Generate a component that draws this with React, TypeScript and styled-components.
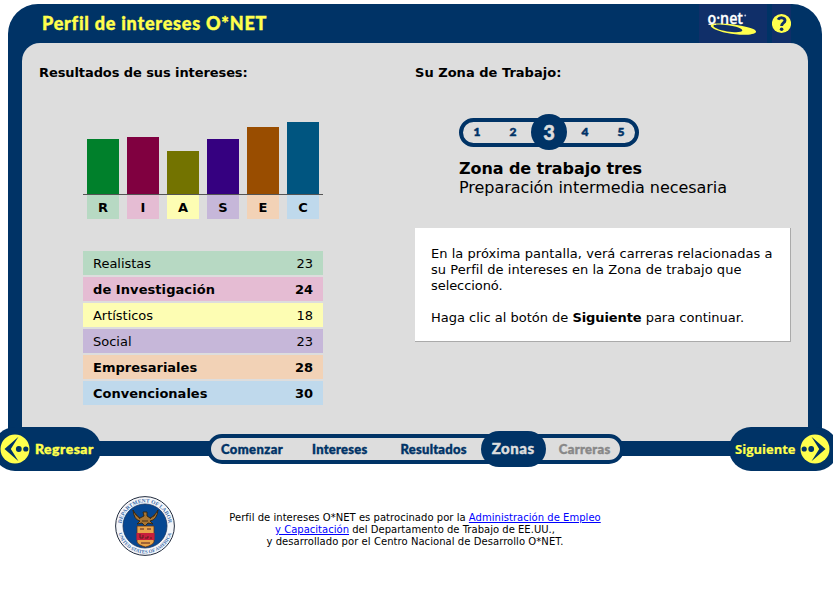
import React from "react";
import styled, { createGlobalStyle } from "styled-components";

const NAVY = "#003366";
const YELLOW = "#ffff4d";
const GRAY = "#dddddd";

const GlobalStyle = createGlobalStyle`
  *, *::before, *::after { box-sizing: border-box; }
  body {
    margin: 0;
    overflow: hidden;
    background: #fff;
    color: #000;
    font-family: Verdana, "DejaVu Sans", sans-serif;
    font-size: 13px;
    line-height: 16px;
  }
  p, h1, h2, ul { margin: 0; padding: 0; }
`;

const Page = styled.div`
  width: 833px;
  height: 590px;
  padding-top: 4px;
  overflow: hidden;
`;

const Frame = styled.main`
  margin: 0 11px 0 8px;
  height: 452px;
  padding: 0 14px 15px;
  display: flex;
  flex-direction: column;
  background: ${NAVY};
  border-radius: 30px 30px 0 0;
`;

const Header = styled.header`
  height: 39px;
  flex: none;
  display: flex;
  align-items: stretch;
  padding: 0 17px 0 20px;
`;

const Title = styled.h1`
  flex: 1;
  font: 900 18px/38px Lato, sans-serif;
  letter-spacing: 0.76px;
  -webkit-text-stroke: 0.4px currentColor;
  color: ${YELLOW};
  white-space: nowrap;
`;

const HeaderTile = styled.div<{ $width: number }>`
  width: ${(p) => p.$width}px;
  height: 39px;
  background: #102f69;
  margin-left: 5px;

  svg { display: block; }
`;

const Panel = styled.section`
  flex: 1;
  display: grid;
  grid-template-columns: 376px 376px;
  padding: 22px 17px 0;
  background: ${GRAY};
  border-radius: 18px 18px 0 0;
`;

const Column = styled.div`
  min-width: 0;
`;

const Text = styled.span<{ $spacing?: number; $bold?: boolean }>`
  letter-spacing: ${(p) => p.$spacing ?? 0}px;
  font-weight: ${(p) => (p.$bold ? 700 : "inherit")};
  white-space: nowrap;
`;

const SectionTitle = styled.h2<{ $spacing: number }>`
  font-size: 13px;
  line-height: 16px;
  letter-spacing: ${(p) => p.$spacing}px;
  white-space: nowrap;
`;

const Chart = styled.div`
  width: 240px;
  margin: 33px 0 0 44px;
`;

const Bars = styled.div`
  height: 81px;
  padding: 0 4px;
  display: flex;
  align-items: flex-end;
  gap: 8px;
  border-bottom: 1px solid #555;
`;

const Bar = styled.div<{ $height: number; $color: string }>`
  width: 32px;
  height: ${(p) => p.$height}px;
  background: ${(p) => p.$color};
`;

const Letters = styled.div`
  display: flex;
  gap: 8px;
  padding: 0 4px;
`;

const Letter = styled.div<{ $tint: string }>`
  width: 32px;
  height: 24px;
  font-weight: 700;
  line-height: 25px;
  text-align: center;
  background: ${(p) => p.$tint};
`;

const Scores = styled.ul`
  width: 240px;
  margin: 32px 0 0 44px;
  display: grid;
  gap: 2px;
  list-style: none;
`;

const Score = styled.li<{ $tint: string; $bold: boolean }>`
  height: 24px;
  padding: 0 10px;
  display: flex;
  justify-content: space-between;
  line-height: 25px;
  font-weight: ${(p) => (p.$bold ? 700 : 400)};
  background: ${(p) => p.$tint};
`;

const ZonePill = styled.div`
  width: 180px;
  height: 29px;
  margin: 37px 0 0 44px;
  display: grid;
  grid-template-columns: repeat(5, 36px);
  justify-content: center;
  align-content: center;
  align-items: center;
  justify-items: center;
  border: 4px solid ${NAVY};
  border-radius: 15px;
`;

const ZoneNumber = styled.span<{ $current: boolean }>`
  width: 36px;
  height: ${(p) => (p.$current ? 36 : 16)}px;
  margin-top: -1px;
  border-radius: 50%;
  text-align: center;
  font-family: Lato, sans-serif;
  font-weight: 900;
  font-size: ${(p) => (p.$current ? 20 : 12)}px;
  line-height: ${(p) => (p.$current ? 36 : 16)}px;
  -webkit-text-stroke: 0.5px currentColor;
  color: ${(p) => (p.$current ? GRAY : NAVY)};
  background: ${(p) => (p.$current ? NAVY : "transparent")};
`;

const ZoneText = styled.div`
  margin: 12px 0 0 44px;
  font-size: 16px;
  line-height: 19px;
`;

const ZoneLine = styled.p<{ $bold?: boolean; $spacing: number }>`
  font-weight: ${(p) => (p.$bold ? 700 : 400)};
  letter-spacing: ${(p) => p.$spacing}px;
  white-space: nowrap;
`;

const Notice = styled.div`
  width: 376px;
  height: 114px;
  margin-top: 31px;
  padding: 18px 16px 0;
  background: #fff;
  border: solid #aaa;
  border-width: 0 1px 1px 0;
`;

const Paragraph = styled.p`
  & + & { margin-top: 16px; }
`;

const Navigation = styled.nav`
  position: relative;
  height: 44px;
  margin: -29px -5px 0 -7px;
  display: flex;
  align-items: center;
`;

const DirectionButton = styled.button<{ $width: number; $gap: number }>`
  flex: none;
  width: ${(p) => p.$width}px;
  height: 44px;
  padding: 0 0 0 ${(p) => p.$gap + 2}px;
  border: 0;
  border-radius: 22px;
  display: flex;
  align-items: center;
  gap: ${(p) => p.$gap}px;
  color: ${YELLOW};
  background: ${NAVY};

  svg { flex: none; }
`;

const ButtonLabel = styled.span<{ $font: string; $spacing: number; $stroke: number }>`
  font: ${(p) => p.$font};
  letter-spacing: ${(p) => p.$spacing}px;
  -webkit-text-stroke: ${(p) => p.$stroke}px currentColor;
  white-space: nowrap;
`;

const Steps = styled.div`
  flex: none;
  width: 417px;
  height: 30px;
  margin: 0 auto 0 106px;
  padding-left: 10px;
  display: flex;
  align-items: center;
  border: 4px solid ${NAVY};
  border-radius: 15px;
  background: ${GRAY};
`;

const Step = styled.span<{ $gap: number; $spacing: number; $muted?: boolean }>`
  flex: none;
  margin-right: ${(p) => p.$gap}px;
  font: 900 13px/16px Lato, sans-serif;
  letter-spacing: ${(p) => p.$spacing}px;
  -webkit-text-stroke: 0.4px currentColor;
  color: ${(p) => (p.$muted ? "#888" : NAVY)};
`;

const CurrentStep = styled.span`
  flex: none;
  width: 65px;
  height: 36px;
  margin-right: 13px;
  border-radius: 18px;
  text-align: center;
  font: 900 15px/35px Lato, sans-serif;
  letter-spacing: 0.5px;
  -webkit-text-stroke: 0.4px currentColor;
  color: ${GRAY};
  background: ${NAVY};
`;

const Sponsor = styled.footer`
  display: flex;
  margin: 25px 0 0 115px;
`;

const Credit = styled.div`
  width: 400px;
  margin: 16px 0 0 40px;
  text-align: center;
  font-size: 10px;
  line-height: 12px;

  a { color: #0000ff; text-decoration: underline; }
`;

const CreditLine = styled.p<{ $spacing: number }>`
  letter-spacing: ${(p) => p.$spacing}px;
  white-space: nowrap;
`;

const interests = [
  { letter: "R", name: "Realistas", score: 23, height: 55, color: "#00802b", tint: "#b7d9c3", top: false, spacing: -0.03 },
  { letter: "I", name: "de Investigación", score: 24, height: 57, color: "#800040", tint: "#e5bcd3", top: true, spacing: 0.07 },
  { letter: "A", name: "Artísticos", score: 18, height: 43, color: "#737300", tint: "#fdfdb3", top: false, spacing: -0.03 },
  { letter: "S", name: "Social", score: 23, height: 55, color: "#350080", tint: "#c6b7d9", top: false, spacing: 0 },
  { letter: "E", name: "Empresariales", score: 28, height: 67, color: "#994d00", tint: "#f2d2b6", top: true, spacing: 0 },
  { letter: "C", name: "Convencionales", score: 30, height: 72, color: "#005580", tint: "#bfd9ec", top: true, spacing: 0 },
];

const OnetLogo = () => (
  <svg width="68" height="39" viewBox="0 0 68 39">
    <text x="8.5" y="20" fill="#fff" stroke="#fff" strokeWidth=".3" fontFamily="Open Sans, sans-serif" fontWeight="600" fontSize="16" textLength="35.5" lengthAdjust="spacingAndGlyphs">o·net</text>
    <path d="M9.5 20.3H17" stroke="#fff" strokeWidth="1.2" />
    <circle cx="46.2" cy="11.5" r="1" fill="#b8c4dc" />
    <path
      fill={YELLOW}
      fillRule="evenodd"
      d="M12 20.7C17 18.5 30 19.5 42 21.7C52 23.5 58 25.8 57 28C55.500 31.500 40 31.600 28 29C17 26.700 10 23 12 20.700ZM14.500 21.500C13.500 23 20 26.200 28 27.400C36 28.600 43 28.500 43.300 26.500C43.600 24.400 37 22.500 29 21.300C22 20.300 16 20.300 14.500 21.500Z"
    />
  </svg>
);

const HelpIcon = () => (
  <svg width="19" height="39" viewBox="0 0 19 39">
    <circle cx="9.500" cy="19.500" r="9.600" fill={YELLOW} />
    <path d="M6 15.600C7.500 13 13 13.200 13 16.500C13 19.100 9.600 18.900 9.600 22" fill="none" stroke="#102f69" strokeWidth="2.900" />
    <circle cx="9.600" cy="25.300" r="1.800" fill="#102f69" />
  </svg>
);

const ArrowIcon = ({ forward = false }: { forward?: boolean }) => (
  <svg width="30" height="30" viewBox="0 0 30 30">
    <g transform={forward ? "translate(30 0) scale(-1 1)" : undefined}>
      <circle cx="15" cy="15" r="14.500" fill={YELLOW} />
      <path d="M18.500 2.800L4.500 15L18.500 27.200L10.800 15Z" fill={NAVY} />
      <circle cx="18.800" cy="15" r="2.900" fill={NAVY} />
      <circle cx="25.800" cy="15" r="2.600" fill={NAVY} />
    </g>
  </svg>
);

const LaborSeal = () => (
  <svg width="60" height="60" viewBox="0 0 60 60">
    <defs>
      <path id="seal-top" d="M6.700 34A23.600 23.600 0 1 1 53.300 34" />
      <path id="seal-bottom" d="M2.600 30A27.400 27.400 0 0 0 57.400 30" />
    </defs>
    <circle cx="30" cy="30" r="29.400" fill="#f4f6fa" stroke="#222c3e" strokeWidth="1" />
    <circle cx="30" cy="30" r="22" fill="#064792" stroke="#153260" strokeWidth=".8" />
    <g fill="#3f6fab" fontFamily="Liberation Serif, serif" fontWeight="700" textAnchor="middle">
      <text fontSize="5.5"><textPath href="#seal-top" startOffset="50%">DEPARTMENT OF LABOR</textPath></text>
      <text fontSize="4.900"><textPath href="#seal-bottom" startOffset="50%">UNITED STATES OF AMERICA</textPath></text>
    </g>
    <path d="M18 14Q19 24 25 25L22 28L27 27L30 30L33 27L38 28L35 25Q42 24 43 14L39 20L35 22L32 20L32 16L28 16L29 20L25 22L21 19Z" fill="#a87532" stroke="#32240e" strokeWidth=".9" />
    <path d="M20 17L25 23M41 17L35 23M27 25H33" stroke="#493116" strokeWidth="1" />
    <path d="M22 30H39V46Q38 49 30.500 51Q23 49 22 46Z" fill="#e9a54b" stroke="#5b321c" strokeWidth=".8" />
    <path d="M21.500 37H39.500V44H21.500Z" fill="#c71f3c" />
    <path d="M25 38V42H28V39M30 42H33V40M35 42H37M25 33H29M32 33H36M26 47H35" fill="none" stroke="#542023" strokeWidth="1" />
  </svg>
);

export default function App() {
  return (
    <>
      <GlobalStyle />
      <Page>
        <Frame>
          <Header>
            <Title>Perfil de intereses O*NET</Title>
            <HeaderTile $width={68}><OnetLogo /></HeaderTile>
            <HeaderTile $width={19}><HelpIcon /></HeaderTile>
          </Header>
          <Panel>
            <Column>
              <SectionTitle $spacing={-0.09}>Resultados de sus intereses:</SectionTitle>
              <Chart>
                <Bars>
                  {interests.map((i) => <Bar key={i.letter} $height={i.height} $color={i.color} />)}
                </Bars>
                <Letters>
                  {interests.map((i) => <Letter key={i.letter} $tint={i.tint}>{i.letter}</Letter>)}
                </Letters>
              </Chart>
              <Scores>
                {interests.map((i) => (
                  <Score key={i.letter} $tint={i.tint} $bold={i.top}>
                    <Text $spacing={i.spacing}>{i.name}</Text>
                    <span>{i.score}</span>
                  </Score>
                ))}
              </Scores>
            </Column>
            <Column>
              <SectionTitle $spacing={0.02}>Su Zona de Trabajo:</SectionTitle>
              <ZonePill>
                {[1, 2, 3, 4, 5].map((n) => <ZoneNumber key={n} $current={n === 3}>{n}</ZoneNumber>)}
              </ZonePill>
              <ZoneText>
                <ZoneLine $bold $spacing={-0.09}>Zona de trabajo tres</ZoneLine>
                <ZoneLine $spacing={-0.05}>Preparación intermedia necesaria</ZoneLine>
              </ZoneText>
              <Notice>
                <Paragraph>
                  <Text $spacing={0.04}>En la próxima pantalla, verá carreras relacionadas a</Text><br />
                  <Text $spacing={0.045}>su Perfil de intereses en la Zona de trabajo que</Text><br />
                  <Text $spacing={-0.07}>seleccionó.</Text>
                </Paragraph>
                <Paragraph>
                  <Text>Haga clic al botón de </Text>
                  <Text $bold $spacing={-0.1}>Siguiente</Text>
                  <Text> para continuar.</Text>
                </Paragraph>
              </Notice>
            </Column>
          </Panel>
        </Frame>
        <Navigation>
          <DirectionButton $width={108} $gap={5}>
            <ArrowIcon />
            <ButtonLabel $font="900 14px/16px Lato, sans-serif" $spacing={0.5} $stroke={0.4}>Regresar</ButtonLabel>
          </DirectionButton>
          <Steps>
            <Step $gap={29} $spacing={0.4}>Comenzar</Step>
            <Step $gap={33} $spacing={0.27}>Intereses</Step>
            <Step $gap={14} $spacing={0.25}>Resultados</Step>
            <CurrentStep>Zonas</CurrentStep>
            <Step $gap={0} $spacing={0.36} $muted>Carreras</Step>
          </Steps>
          <DirectionButton $width={109} $gap={4}>
            <ButtonLabel $font="700 13px/16px 'Open Sans', sans-serif" $spacing={0} $stroke={0.2}>Siguiente</ButtonLabel>
            <ArrowIcon forward />
          </DirectionButton>
        </Navigation>
        <Sponsor>
          <LaborSeal />
          <Credit>
            <CreditLine $spacing={0.034}>
              Perfil de intereses O*NET es patrocinado por la <a href="#empleo">Administración de Empleo</a>
            </CreditLine>
            <CreditLine $spacing={0.02}>
              <a href="#empleo">y Capacitación</a> del Departamento de Trabajo de EE.UU.,
            </CreditLine>
            <CreditLine $spacing={0.06}>y desarrollado por el Centro Nacional de Desarrollo O*NET.</CreditLine>
          </Credit>
        </Sponsor>
      </Page>
    </>
  );
}
